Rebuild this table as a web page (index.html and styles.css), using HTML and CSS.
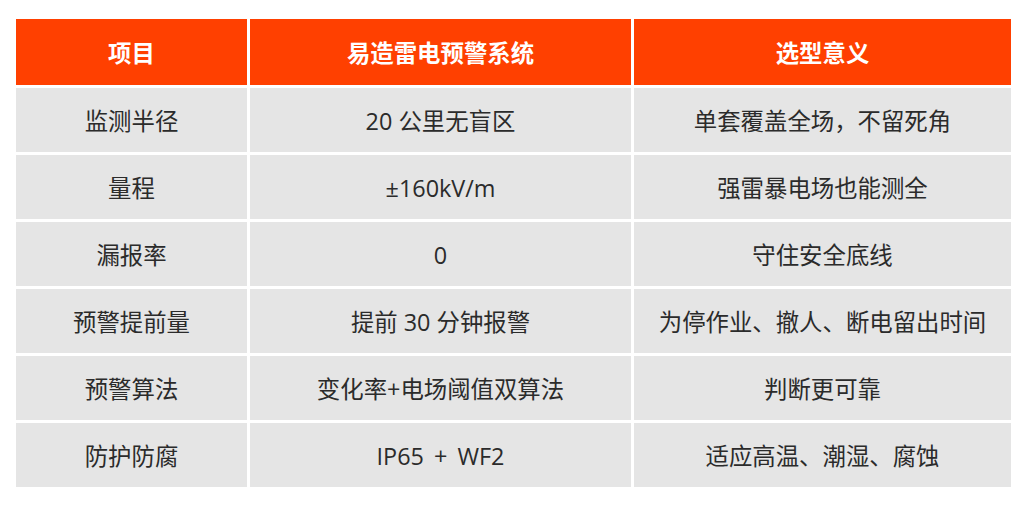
FILE: index.html
```html
<!DOCTYPE html>
<html lang="zh-CN">
<head>
<meta charset="utf-8">
<link rel="stylesheet" href="styles.css">
</head>
<body>
<div class="table">
  <div class="cell head">项目</div>
  <div class="cell head">易造雷电预警系统</div>
  <div class="cell head">选型意义</div>

  <div class="cell">监测半径</div>
  <div class="cell">20 公里无盲区</div>
  <div class="cell">单套覆盖全场，不留死角</div>

  <div class="cell">量程</div>
  <div class="cell">±160kV/m</div>
  <div class="cell">强雷暴电场也能测全</div>

  <div class="cell">漏报率</div>
  <div class="cell">0</div>
  <div class="cell">守住安全底线</div>

  <div class="cell">预警提前量</div>
  <div class="cell">提前 30 分钟报警</div>
  <div class="cell">为停作业、撤人、断电留出时间</div>

  <div class="cell">预警算法</div>
  <div class="cell">变化率+电场阈值双算法</div>
  <div class="cell">判断更可靠</div>

  <div class="cell">防护防腐</div>
  <div class="cell wide">IP65 + WF2</div>
  <div class="cell">适应高温、潮湿、腐蚀</div>
</div>
</body>
</html>
```

FILE: styles.css
```css
html, body {
  margin: 0;
  padding: 0;
  background: #ffffff;
}
body {
  padding: 19px 0 0 16px;
  font-family: "Open Sans", "Noto Sans CJK SC", sans-serif;
}
.table {
  display: grid;
  grid-template-columns: 231px 381px 377px;
  grid-template-rows: 66px repeat(6, 64px);
  gap: 3px;
}
.cell {
  display: flex;
  align-items: center;
  justify-content: center;
  padding-top: 3px;
  box-sizing: border-box;
  background: #e5e5e5;
  color: #2b2b2b;
  font-size: 23.4px;
  line-height: 1;
  white-space: pre;
}
.cell.wide {
  word-spacing: 4px;
}
.cell.head {
  background: #ff4000;
  color: #ffffff;
  font-weight: 700;
}
```
